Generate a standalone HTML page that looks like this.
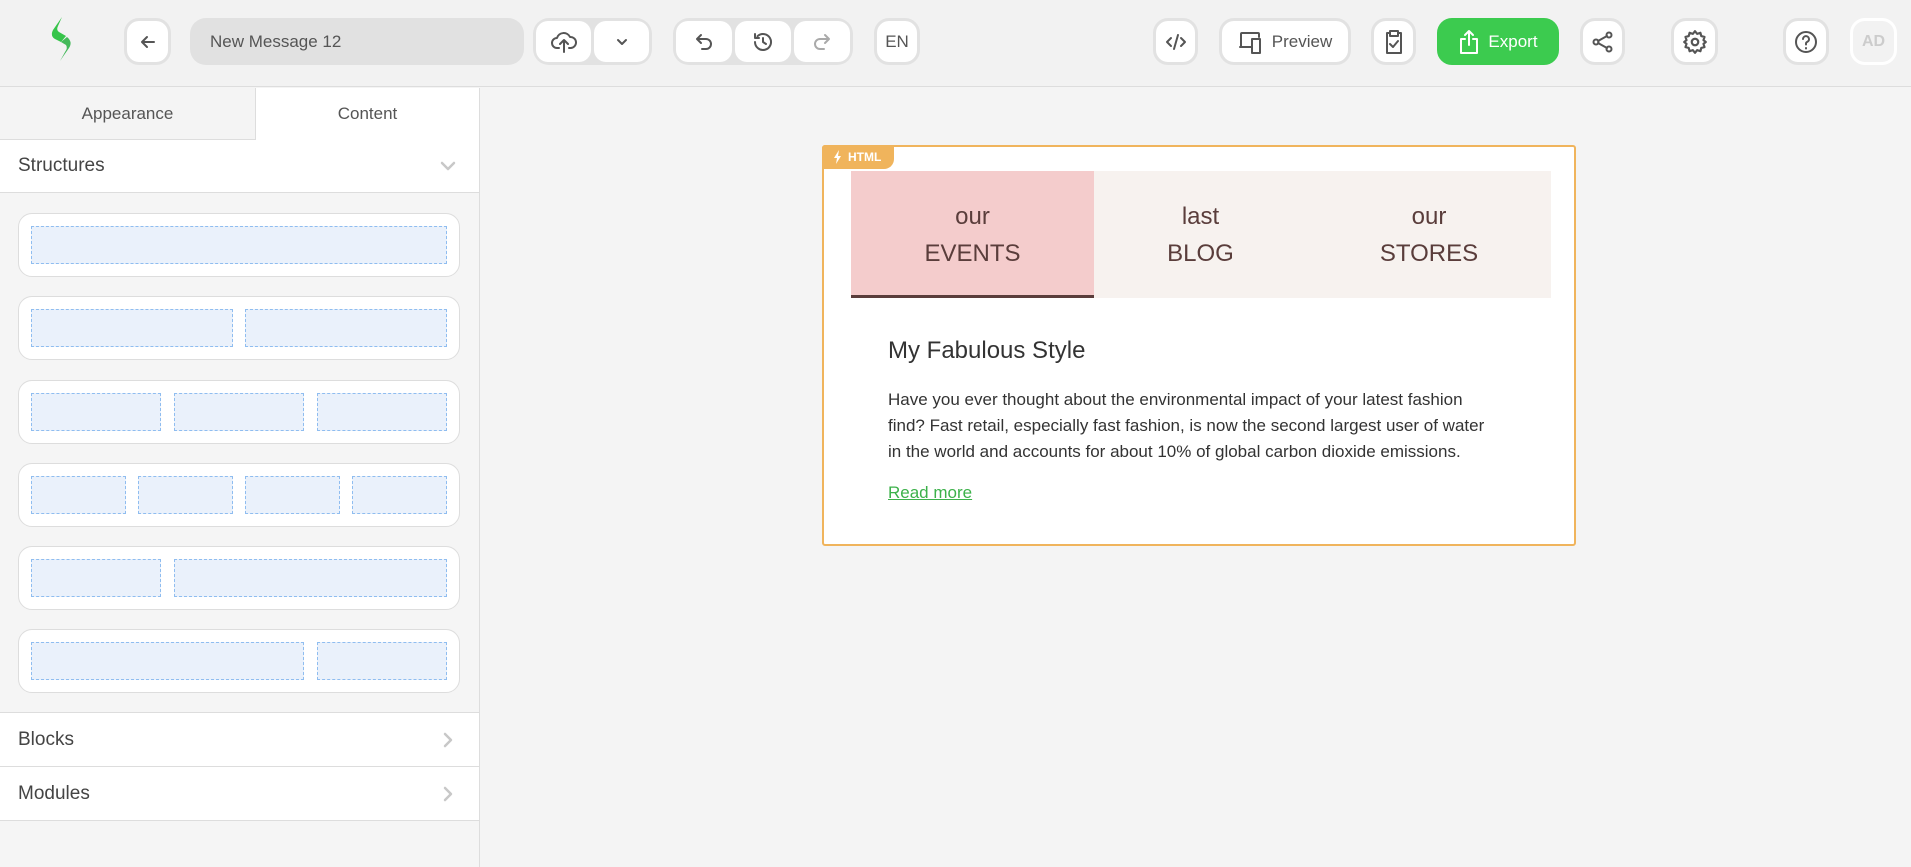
<!DOCTYPE html>
<html><head><meta charset="utf-8"><style>
*{box-sizing:border-box;margin:0;padding:0}
body{width:1911px;height:867px;overflow:hidden;background:#f4f4f4;font-family:"Liberation Sans",sans-serif;position:relative;color:#444}
.hdr{position:absolute;left:0;top:0;width:1911px;height:87px;background:#f2f2f2;border-bottom:1px solid #ddd}
.b{position:absolute;top:18px;height:47px;background:#fff;border:3px solid #e2e2e2;border-radius:15px;display:flex;align-items:center;justify-content:center;color:#555;font-size:17px}
.b svg{stroke:#555;fill:none;stroke-width:2;stroke-linecap:round;stroke-linejoin:round}
.grp{position:absolute;top:18px;height:47px;background:#e2e2e2;border-radius:16px;display:flex;padding:3px;gap:3px}
.grp div{background:#fff;flex:1;border-radius:12px;display:flex;align-items:center;justify-content:center}
.grp svg{stroke:#555;fill:none;stroke-width:2;stroke-linecap:round;stroke-linejoin:round}
.side{position:absolute;left:0;top:88px;width:480px;height:779px;background:#f5f5f5;border-right:1px solid #ddd}
.tab{position:absolute;top:0;height:52px;display:flex;align-items:center;justify-content:center;font-size:17px;color:#555}
.sec{position:absolute;left:0;width:479px;background:#fff;border-bottom:1px solid #ddd;font-size:19px;color:#444;padding-left:18px;display:flex;align-items:center}
.card{position:absolute;left:18px;width:442px;height:64px;background:#fff;border:1px solid #ddd;border-radius:14px}
.in{position:absolute;top:12px;height:38px;background:#eaf1fb;border:1px dashed #8fbdf0}
.chev{position:absolute;right:22px;top:50%;margin-top:-9px}
.chev svg{stroke:#c8c8c8;fill:none;stroke-width:2.5;stroke-linecap:round;stroke-linejoin:round}
</style></head><body>
<div class="hdr">
<svg style="position:absolute;left:48px;top:16px" width="26" height="46" viewBox="0 0 26 46"><path d="M14 1 L5 14 Q2 20 7 23 L13 26 L18 20 L11 16 Q8 14 10 10 Z" fill="#36c44a"/><path d="M13 26 L18 29 Q20 32 17 36 L12 45 L21 32 Q25 26 19 21 Z" fill="#44b95a"/></svg>
<div class="b" style="left:124px;width:47px"><svg width="20" height="20" viewBox="0 0 20 20"><path d="M16 10H4M9 5L4 10L9 15"/></svg></div>
<div style="position:absolute;left:190px;top:18px;width:334px;height:47px;background:#e1e1e1;border-radius:16px;font-size:17px;color:#555;padding-left:20px;line-height:47px">New Message 12</div>
<div class="grp" style="left:533px;width:119px"><div><svg width="26" height="24" viewBox="0 0 26 24"><path d="M8 18H6a5 5 0 0 1 0-10 7 7 0 0 1 13-1 5 5 0 0 1 1 11h-2M13 22V11M9 14l4-4 4 4"/></svg></div><div><svg width="14" height="10" viewBox="0 0 14 10"><path d="M3 3l4 4 4-4"/></svg></div></div>
<div class="grp" style="left:673px;width:180px"><div><svg width="22" height="22" viewBox="0 0 22 22"><path d="M8 4L4 8l4 4M4 8h9a5 5 0 0 1 0 10H9"/></svg></div><div><svg width="24" height="24" viewBox="0 0 24 24"><path d="M4 12a8 8 0 1 0 2.5-5.8M4 4v4h4M12 8v4l3 2"/></svg></div><div><svg width="22" height="22" viewBox="0 0 22 22" style="stroke:#aaa"><path d="M14 4l4 4-4 4M18 8H9a5 5 0 0 0 0 10h4"/></svg></div></div>
<div class="b" style="left:874px;width:46px">EN</div>
<div class="b" style="left:1153px;width:45px"><svg width="22" height="18" viewBox="0 0 22 18"><path d="M6 5L2 9l4 4M16 5l4 4-4 4M13 2L9 16"/></svg></div>
<div class="b" style="left:1219px;width:132px;gap:8px"><svg width="26" height="26" viewBox="0 0 26 26"><path d="M3 18V5a1 1 0 0 1 1-1h16a1 1 0 0 1 1 1v3M2 18h11M14 10h8v14h-8z"/></svg>Preview</div>
<div class="b" style="left:1371px;width:45px"><svg width="22" height="26" viewBox="0 0 22 26"><path d="M7 4H4v20h14V4h-3M7 2h8v5H7zM7 15l3 3 5-6"/></svg></div>
<div class="b" style="left:1437px;width:122px;background:#3ccb4f;border-color:#3ccb4f;color:#fff;gap:8px"><svg width="22" height="26" viewBox="0 0 22 26" style="stroke:#fff"><path d="M7 10H3v14h16V10h-4M11 16V2M7 6l4-4 4 4"/></svg>Export</div>
<div class="b" style="left:1580px;width:45px"><svg width="24" height="24" viewBox="0 0 24 24"><circle cx="18" cy="5" r="2.5"/><circle cx="5" cy="12" r="2.5"/><circle cx="18" cy="19" r="2.5"/><path d="M7 11l9-5M7 13l9 5"/></svg></div>
<div class="b" style="left:1671px;width:47px"><svg width="26" height="26" viewBox="0 0 24 24"><circle cx="12" cy="12" r="3"/><path d="M12 2l2 2.5 3-1 .8 3 3 .8-1 3L22 12l-2.2 1.7 1 3-3 .8-.8 3-3-1L12 22l-2-2.5-3 1-.8-3-3-.8 1-3L2 12l2.2-1.7-1-3 3-.8.8-3 3 1z"/></svg></div>
<div class="b" style="left:1783px;width:46px"><svg width="26" height="26" viewBox="0 0 26 26"><circle cx="13" cy="13" r="10"/><path d="M10 10a3 3 0 1 1 4 3c-1 .5-1 1-1 2.5M13 19v.5"/></svg></div>
<div class="b" style="left:1850px;width:47px;border-color:#fff;background:#f2f2f2;color:#ccc;font-weight:bold;font-size:16px">AD</div>
</div>
<div class="side">
<div class="tab" style="left:0;width:256px;background:#f4f4f4;border-bottom:1px solid #ddd;border-right:1px solid #ddd">Appearance</div>
<div class="tab" style="left:256px;width:223px;background:#fff">Content</div>
<div class="sec" style="top:52px;height:53px">Structures<span class="chev"><svg width="18" height="18" viewBox="0 0 18 18"><path d="M3 6l6 6 6-6"/></svg></span></div>
<div class="card" style="top:125px"><div class="in" style="left:12px;width:416px"></div></div>
<div class="card" style="top:208px"><div class="in" style="left:12px;width:202px"></div><div class="in" style="left:226px;width:202px"></div></div>
<div class="card" style="top:292px"><div class="in" style="left:12px;width:130px"></div><div class="in" style="left:155px;width:130px"></div><div class="in" style="left:298px;width:130px"></div></div>
<div class="card" style="top:375px"><div class="in" style="left:12px;width:95px"></div><div class="in" style="left:119px;width:95px"></div><div class="in" style="left:226px;width:95px"></div><div class="in" style="left:333px;width:95px"></div></div>
<div class="card" style="top:458px"><div class="in" style="left:12px;width:130px"></div><div class="in" style="left:155px;width:273px"></div></div>
<div class="card" style="top:541px"><div class="in" style="left:12px;width:273px"></div><div class="in" style="left:298px;width:130px"></div></div>
<div class="sec" style="top:624px;height:55px;border-top:1px solid #ddd">Blocks<span class="chev"><svg width="18" height="18" viewBox="0 0 18 18"><path d="M6 3l6 6-6 6"/></svg></span></div>
<div class="sec" style="top:679px;height:54px">Modules<span class="chev"><svg width="18" height="18" viewBox="0 0 18 18"><path d="M6 3l6 6-6 6"/></svg></span></div>
</div>
<div style="position:absolute;left:822px;top:145px;width:754px;height:401px;background:#fff;border:2px solid #f0b45c;border-radius:3px">
<div style="position:absolute;left:-2px;top:-2px;width:72px;height:24px;background:#f0b45c;border-radius:3px 0 10px 0;color:#fff;font-size:12px;font-weight:bold;line-height:24px;padding-left:26px"><svg style="position:absolute;left:11px;top:5px" width="9" height="14" viewBox="0 0 9 14"><path d="M6 0L1 8h3l-1 6 5-8H5z" fill="#fff"/></svg>HTML</div>
<div style="position:absolute;left:27px;top:24px;width:700px;height:127px;background:#f7f2ef;display:flex;font-size:24px;color:#5a3d3b;text-align:center;line-height:37px">
<div style="width:243px;background:#f4cccc;border-bottom:3px solid #5a3d3b;padding-top:27px">our<br>EVENTS</div>
<div style="width:213px;padding-top:27px">last<br>BLOG</div>
<div style="width:244px;padding-top:27px">our<br>STORES</div>
</div>
<div style="position:absolute;left:64px;top:190px;font-size:24px;color:#333">My Fabulous Style</div>
<div style="position:absolute;left:64px;top:240px;width:603px;font-size:17px;line-height:26px;color:#333">Have you ever thought about the environmental impact of your latest fashion find? Fast retail, especially fast fashion, is now the second largest user of water in the world and accounts for about 10% of global carbon dioxide emissions.</div>
<div style="position:absolute;left:64px;top:336px;font-size:17px;color:#3cb14a;text-decoration:underline">Read more</div>
</div>
</body></html>
